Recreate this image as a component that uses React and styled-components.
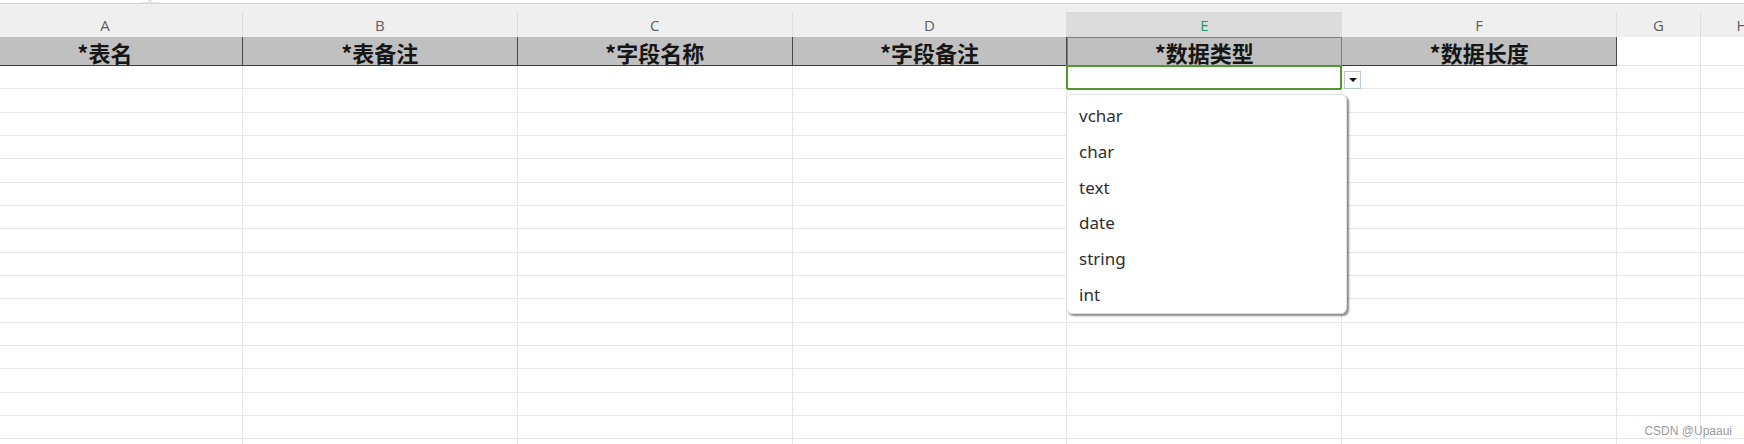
import React from "react";
import styled, { createGlobalStyle } from "styled-components";

const GlobalStyle = createGlobalStyle`
  html, body {
    margin: 0;
    padding: 0;
    background: #ffffff;
    overflow: hidden;
  }
`;

const COLS = ["A", "B", "C", "D", "E", "F", "G", "H"];
const TITLES = ["*表名", "*表备注", "*字段名称", "*字段备注", "*数据类型", "*数据长度"];
const OPTIONS = ["vchar", "char", "text", "date", "string", "int"];
const BODY_ROWS = 17;

const Sheet = styled.div`
  position: relative;
  width: 1744px;
  height: 444px;
  overflow: hidden;
  background: #fff;
`;

const TopStrip = styled.div`
  position: relative;
  height: 12px;
  background: #efefef;
  border-top: 3px solid #ffffff;
  box-sizing: border-box;
  box-shadow: inset 0 1px 0 #d4d4d4;
`;

const Caret = styled.svg`
  position: absolute;
  left: 140px;
  top: -3px;
`;

const Grid = styled.div`
  display: grid;
  grid-template-columns: repeat(6, 274.85px) 83.6px 83.6px;
  margin-left: -32px;
`;

const ColHead = styled.div`
  height: 25px;
  box-sizing: border-box;
  border-right: 1px solid #dcdcdc;
  background: ${(p) => (p.$active ? "#dcdcdc" : "#efefef")};
  color: ${(p) => (p.$active ? "#1e9a5c" : "#5f5f5f")};
  font-family: "Open Sans", "Liberation Sans", sans-serif;
  font-size: 15px;
  display: flex;
  align-items: center;
  justify-content: center;
`;

const TitleCell = styled.div`
  position: relative;
  height: 29px;
  box-sizing: border-box;
  background: ${(p) => (p.$empty ? "#ffffff" : "#c0c0c0")};
  border-right: 1px solid ${(p) => (p.$empty ? "#e4e4e4" : "#474747")};
  border-bottom: 1px solid ${(p) => (p.$empty ? "#e6e6e6" : "#3a3a3a")};
  font-family: "Noto Sans CJK SC", "Noto Sans", sans-serif;
  font-weight: 700;
  font-size: 22px;
  color: #161616;
  display: flex;
  align-items: center;
  justify-content: center;
  padding-top: 2px;
  outline: ${(p) => (p.$active ? "1px solid #5a9e3a" : "none")};
  outline-offset: -1px;
`;

const Cell = styled.div`
  position: relative;
  height: 23.33px;
  box-sizing: border-box;
  border-right: 1px solid #e6e6e6;
  border-bottom: 1px solid #e6e6e6;

  ${(p) =>
    p.$selected &&
    `
    &::after {
      content: "";
      position: absolute;
      left: -1px;
      top: -1px;
      right: -1px;
      bottom: -2px;
      border: 2px solid #4f9a2c;
    }
  `}
`;

const ArrowButton = styled.div`
  position: absolute;
  left: 1344px;
  top: 71px;
  width: 17px;
  height: 18px;
  box-sizing: border-box;
  border: 1px solid #b9c8d8;
  background: #fff;
  display: flex;
  align-items: center;
  justify-content: center;
`;

const Triangle = styled.span`
  width: 0;
  height: 0;
  border-left: 4px solid transparent;
  border-right: 4px solid transparent;
  border-top: 4px solid #111;
`;

const Dropdown = styled.ul`
  position: absolute;
  left: 1066px;
  top: 94px;
  width: 281px;
  height: 220px;
  margin: 0;
  padding: 3px 0 0;
  box-sizing: border-box;
  list-style: none;
  background: #fff;
  border: 1px solid #dedede;
  border-radius: 6px;
  box-shadow: 2px 2px 2px rgba(0, 0, 0, 0.45);
`;

const Option = styled.li`
  height: 35.7px;
  padding-left: 12px;
  display: flex;
  align-items: center;
  font-family: "Noto Sans", "Open Sans", sans-serif;
  font-size: 17px;
  color: #2e2e2e;
`;

const Watermark = styled.div`
  position: absolute;
  right: 12px;
  bottom: 6px;
  font-family: "Liberation Sans", Arial, sans-serif;
  font-size: 12px;
  color: #9a9a9a;
`;

export default function App() {
  return (
    <>
      <GlobalStyle />
      <Sheet>
        <TopStrip>
          <Caret width="20" height="8" viewBox="0 0 20 8">
            <path d="M0 3 L6 3 Q8 3 9 1.5 L10 0 L11 1.5 Q12 3 14 3 L20 3" fill="#efefef" stroke="#d4d4d4" strokeWidth="1" />
          </Caret>
        </TopStrip>
        <Grid>
          {COLS.map((c) => (
            <ColHead key={c} $active={c === "E"}>
              {c}
            </ColHead>
          ))}
          {COLS.map((c, i) => (
            <TitleCell key={c} $empty={!TITLES[i]} $active={c === "E"}>
              {TITLES[i]}
            </TitleCell>
          ))}
          {Array.from({ length: BODY_ROWS }).map((_, r) =>
            COLS.map((c) => (
              <Cell key={`${r}-${c}`} $selected={r === 0 && c === "E"} />
            ))
          )}
        </Grid>
        <ArrowButton>
          <Triangle />
        </ArrowButton>
        <Dropdown>
          {OPTIONS.map((o) => (
            <Option key={o}>{o}</Option>
          ))}
        </Dropdown>
        <Watermark>CSDN @Upaaui</Watermark>
      </Sheet>
    </>
  );
}
